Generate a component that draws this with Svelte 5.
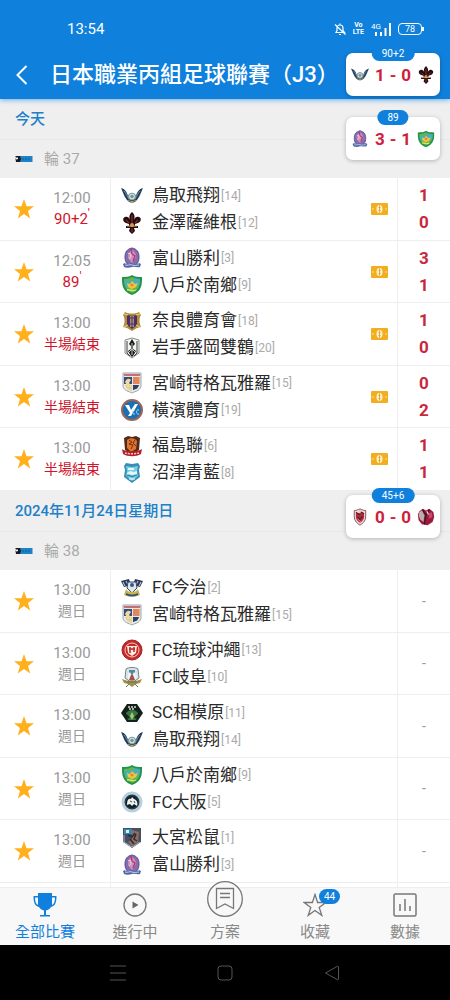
<script lang="ts">
  type Team = { name: string; rank: number; crest: string };

  type Match = {
    time: string;
    status: string;
    minute?: boolean;
    live?: boolean;
    home: Team;
    away: Team;
    score?: [number, number];
  };

  type Day = { date: string; round: string; matches: Match[] };

  const team = (name: string, rank: number, crest: string): Team => ({ name, rank, crest });

  const tottori = team('鳥取飛翔', 14, 'tottori');
  const toyama = team('富山勝利', 3, 'toyama');
  const hachinohe = team('八戶於南鄉', 9, 'hachinohe');
  const miyazaki = team('宮崎特格瓦雅羅', 15, 'miyazaki');

  const days: Day[] = [
    {
      date: '今天',
      round: '輪 37',
      matches: [
        { time: '12:00', status: '90+2', minute: true, live: true, home: tottori, away: team('金澤薩維根', 12, 'kanazawa'), score: [1, 0] },
        { time: '12:05', status: '89', minute: true, live: true, home: toyama, away: hachinohe, score: [3, 1] },
        { time: '13:00', status: '半場結束', live: true, home: team('奈良體育會', 18, 'nara'), away: team('岩手盛岡雙鶴', 20, 'iwate'), score: [1, 0] },
        { time: '13:00', status: '半場結束', live: true, home: miyazaki, away: team('橫濱體育', 19, 'yokohama'), score: [0, 2] },
        { time: '13:00', status: '半場結束', live: true, home: team('福島聯', 6, 'fukushima'), away: team('沼津青藍', 8, 'numazu'), score: [1, 1] }
      ]
    },
    {
      date: '2024年11月24日星期日',
      round: '輪 38',
      matches: [
        { time: '13:00', status: '週日', home: team('FC今治', 2, 'imabari'), away: miyazaki },
        { time: '13:00', status: '週日', home: team('FC琉球沖繩', 13, 'ryukyu'), away: team('FC岐阜', 10, 'gifu') },
        { time: '13:00', status: '週日', home: team('SC相模原', 11, 'sagamihara'), away: tottori },
        { time: '13:00', status: '週日', home: hachinohe, away: team('FC大阪', 5, 'osaka') },
        { time: '13:00', status: '週日', home: team('大宮松鼠', 1, 'omiya'), away: toyama }
      ]
    }
  ];

  // floating live scores
  const floats = [
    { slot: 'first', minute: '90+2', home: 'tottori', away: 'kanazawa', score: [1, 0] },
    { slot: 'second', minute: '89', home: 'toyama', away: 'hachinohe', score: [3, 1] },
    { slot: 'third', minute: '45+6', home: 'redShield', away: 'redBall', score: [0, 0] }
  ];

  const tabs = [
    { id: 'all', label: '全部比賽' },
    { id: 'live', label: '進行中' },
    { id: 'plan', label: '方案' },
    { id: 'fav', label: '收藏', badge: 44 },
    { id: 'data', label: '數據' }
  ];

  let activeTab = $state('all');
</script>

{#snippet crest(id: string)}
  <svg class="crest" viewBox="0 0 22 22" aria-hidden="true">
    {#if id === 'tottori'}
      <path d="M0 3c4 1 6 4 7 8 1-2 2-3 4-3s3 1 4 3c1-4 3-7 7-8-2 4-3 9-7 13-2 2-6 2-8 0C3 12 2 7 0 3z" fill="#233c5c" />
      <path d="M3 6c2 2 3 5 5 8M19 6c-2 2-3 5-5 8" stroke="#6f93a5" stroke-width="1" fill="none" />
      <circle cx="11" cy="11.5" r="3.4" fill="#d9e5dc" stroke="#7ba0a0" />
      <path d="M9 11l2-1.500 2 1.500-1 2h-2z" fill="#6f94a0" />
      <path d="M7 15c2 2 6 2 8 0" stroke="#b9a860" fill="none" />
    {:else if id === 'kanazawa'}
      <path d="M11 0c3 3 3 5 2 8 1-3 3-4 5-3 3 1 2 5-1 6l-3 1v2h3v2h-4l1 3-3 3-3-3 1-3H5v-2h3v-2l-3-1C2 10 1 6 4 5c2-1 4 0 5 3-1-3-1-5 2-8z" fill="#250c10" />
      <path d="M11 3v8M5 8l3 3M17 8l-3 3M11 16v4" stroke="#8d2a25" stroke-width="1.200" />
      <circle cx="11" cy="13" r="2" fill="#cf9a55" />
      <path d="M6 14h10" stroke="#d8ad65" />
    {:else if id === 'toyama'}
      <path d="M11 1c5 1 7 4 7 9s-2 8-7 9c-5-1-7-4-7-9s2-8 7-9z" fill="#8a6bb0" stroke="#49508e" />
      <path d="M11 3c3 2 4 4 4 7l-4 6-4-5c0-4 1-6 4-8z" fill="#c995bd" />
      <path d="M10 2l1 5 3 2-2 5" stroke="#c42f67" stroke-width="1.300" fill="none" />
      <path d="M7 7c1-1 3-1 3 1s-1 3-2 4" stroke="#f0d7ea" fill="none" />
      <path d="M2 17c2-2 4 1 6 0s3-1 5 0 5-2 7 0l-1 3c-3 1-5-1-8 0s-6 1-8 0z" fill="#4d67a5" />
      <path d="M4 18c3 1 4-1 7 0s5 0 7 0" stroke="#c7d4ec" fill="none" />
    {:else if id === 'hachinohe'}
      <path d="M1 3c4 0 7 0 10-2 3 2 6 2 10 2 0 8 0 14-10 18C1 17 1 11 1 3z" fill="#22934b" />
      <path d="M3 5c3 0 6-1 8-2 2 1 5 2 8 2 0 6-1 11-8 14C4 16 3 11 3 5z" fill="#65b64c" />
      <path d="M3 7c4-1 5 1 8-1s5-1 8-1c0 3 0 5-2 7-4 1-8 3-12 1z" fill="#46aebe" />
      <path d="M6 9l3 1 2-3 3 3 3-1-2 4-4 2-4-2z" fill="#f2c63d" />
      <circle cx="11" cy="11" r="1.500" fill="#ec7f3a" />
      <path d="M6 16c3-1 6 2 9 0" stroke="#dce45c" stroke-width="1.500" fill="none" />
    {:else if id === 'nara'}
      <path d="M4 2c4 2 10 2 14 0l2 3c-2 3-2 8 0 12l-4 1-5 3-5-3-4-1c2-4 2-9 0-12z" fill="#b48b3a" />
      <path d="M6 5c3 1 7 1 10 0v10l-5 4-5-4z" fill="#463063" />
      <path d="M9 6h4v11H9z" fill="#a88b91" />
      <path d="M11 6v11M7 8h8M7 14h8" stroke="#573453" />
      <path d="M3 4l4 1M15 5l4-1M3 17l4-2M19 17l-4-2" stroke="#ead38d" />
    {:else if id === 'iwate'}
      <path d="M4 3l7-2 7 2v13l-7 5-7-5z" fill="#f3f3f0" stroke="#888c89" />
      <path d="M11 2l3 5-2 2v3l3 2-3 5-1 1-1-1-3-5 3-2V9L8 7z" fill="#191b1c" />
      <path d="M11 6v12M8 15l3-3 3 3" stroke="#c5c8c5" fill="none" />
      <path d="M6 4v12l3 3M16 4v12l-3 3" stroke="#3b3f42" fill="none" />
    {:else if id === 'miyazaki'}
      <path d="M2 1h18v14c-2 4-5 4-9 6-4-2-7-2-9-6z" fill="#ede8dc" stroke="#9aa5b8" />
      <path d="M3 5h8v7H3z" fill="#334e7e" />
      <path d="M12 5h7v7h-7z" fill="#ebb377" />
      <path d="M3 3h16" stroke="#b64655" stroke-width="1.500" />
      <path d="M12 13h6c-1 4-3 4-6 5z" fill="#29416f" />
      <path d="M4 13h7v6c-4-1-6-3-7-6z" fill="#dfd493" />
      <path d="M4 10c2-4 4-4 6-2l-2 3 3 3-4 1z" fill="#efd9a0" />
      <path d="M13 5v7M15 5v7M17 5v7" stroke="#d45b50" />
    {:else if id === 'yokohama'}
      <circle cx="11" cy="11" r="10" fill="#1671b7" stroke="#9a6558" stroke-width="2" />
      <path d="M4 6h4l2 5 4-6h3l-7 12H7l2-3z" fill="#fff" />
      <path d="M14 11h-1c-2 0-2 4 0 4h1M18 11h-1c-2 0-2 4 0 4h1" stroke="#b4dcee" fill="none" />
    {:else if id === 'fukushima'}
      <path d="M3 3l4-2 4 1 4-1 4 2-1 12-7 4-7-4z" fill="#512a1c" />
      <path d="M6 5c3-3 8-2 10 1l-1 8-5 3-4-4z" fill="#df762c" />
      <path d="M8 5l3 2-3 2 4 1-2 4M14 5l-2 3 3 3" stroke="#702c19" fill="none" />
      <path d="M1 14c3 3 16 3 20 0l-1 5c-5 3-13 3-18 0z" fill="#b51f2b" />
      <path d="M4 18c4 1 10 1 14 0" stroke="#f1c9b2" stroke-width="1.500" stroke-dasharray="2 1" fill="none" />
    {:else if id === 'numazu'}
      <path d="M5 1l6 1 6-1 2 3-1 4 1 7-8 6-8-6 1-7-1-4z" fill="#398cb6" />
      <path d="M5 4l6 1 6-1-1 5 1 5-6 5-6-5 1-5z" fill="#75d0e3" />
      <path d="M7 6h6v2H7zM6 11l3-2 4 1 3-1v3l-5 1-5-1z" fill="#e7f6f4" />
      <path d="M6 14c3-2 4 2 7 0l3-1" stroke="#2789b1" stroke-width="1.300" fill="none" />
      <path d="M8 17h6" stroke="#fff" />
    {:else if id === 'imabari'}
      <path d="M0 4l8-2 2 6-7 2zM22 4l-8-2-2 6 7 2z" fill="#263861" />
      <path d="M2 5l2 4M5 4l2 4M20 5l-2 4M17 4l-2 4" stroke="#d8d9ca" />
      <path d="M7 5h8l1 6-5 5-5-5z" fill="#dfe7e4" stroke="#314568" />
      <circle cx="11" cy="8" r="2" fill="#315796" />
      <path d="M5 12c1 2 3 3 6 3s5-1 6-3l2 6c-5 2-11 2-16 0z" fill="#c6b54f" />
      <path d="M5 16c4 2 8 2 12 0v2c-4 2-8 2-12 0z" fill="#385376" />
    {:else if id === 'ryukyu'}
      <circle cx="11" cy="11" r="10" fill="#c9272c" stroke="#9d2028" />
      <circle cx="11" cy="11" r="7" fill="none" stroke="#efd0b2" />
      <path d="M6 7h10l-1 7-4 3-4-3z" fill="#f8eee0" />
      <path d="M9 8v6M13 8v5M8 10h6" stroke="#bd2428" stroke-width="1.500" />
    {:else if id === 'gifu'}
      <path d="M5 3c2-2 10-2 12 0l1 9-7 5-7-5z" fill="#d9e6e8" stroke="#71848c" />
      <path d="M8 4h6v6H8z" fill="#5487a1" />
      <path d="M7 8l2-2 2 4 2-4 3 3-1 4H7z" fill="#eef4ef" />
      <path d="M10 9l-2 5h6l-2-5z" fill="#a64e51" />
      <path d="M1 13l6 2 4-1 4 1 6-2-2 4-4 1-4 3-4-3-4-1z" fill="#a78e43" />
      <path d="M6 16h10M8 18l-3 3M14 18l3 3" stroke="#57766a" />
    {:else if id === 'sagamihara'}
      <path d="M6 2h10l6 9-6 9H6l-6-9z" fill="#13211b" />
      <path d="M5 11c3-4 9-4 12 0l-2 7H7z" fill="#377544" />
      <path d="M7 5h8M8 7h6" stroke="#dadcd3" stroke-width="1.500" stroke-dasharray="2 1" />
      <path d="M11 10l2 4-2 4-2-4z" fill="#a5ca70" />
      <path d="M5 13l3 3M17 13l-3 3" stroke="#132219" stroke-width="2" />
    {:else if id === 'osaka'}
      <circle cx="11" cy="11" r="9" fill="#263a49" stroke="#b8d0dc" stroke-width="3" />
      <circle cx="11" cy="11" r="6" fill="#121d26" />
      <path d="M6 14c0-4 1-7 4-6l1-2 2 2c3 1 4 4 3 7l-3-2-2 2-2-2z" fill="#edf2ef" />
      <path d="M9 10l2 1M13 10l1 2" stroke="#344a57" />
    {:else if id === 'omiya'}
      <path d="M2 1h18v14l-9 6-9-6z" fill="#46505f" />
      <path d="M3 2h8v5H3z" fill="#3488bc" />
      <path d="M11 3l7 2-1 10-6 4-4-4 4-3z" fill="#936c5d" />
      <path d="M7 8l4 2 3-4M9 12l4 5M15 7l-2 5 3 2" stroke="#282d39" stroke-width="1.500" fill="none" />
      <path d="M5 3h3v3H5z" fill="#d9edf0" />
      <path d="M3 8v7l8 5 8-5" stroke="#a9b8c7" fill="none" />
    {:else if id === 'redShield'}
      <path d="M4 3c3 0 5-1 7-2 2 1 4 2 7 2v8c0 5-4 8-7 10-3-2-7-5-7-10z" fill="#f0dbd9" stroke="#704149" />
      <path d="M6 6h10v6c-1 3-3 5-5 6-3-2-5-4-5-7z" fill="#b7293d" />
      <path d="M6 5l4 3 3-3 3 2M8 11l3 3 3-4" stroke="#4d2028" stroke-width="1.300" fill="none" />
      <path d="M11 2v5M8 13l4 4" stroke="#e49a9f" />
    {:else if id === 'redBall'}
      <path d="M3 4l4-3 4 2 4-2 5 4 1 6-2 6-6 4-7-1-4-5-1-7z" fill="#9c1a3b" />
      <path d="M3 5l3-2 3 6-1 8-4-3-2-5z" fill="#bbaeb2" />
      <path d="M7 2l4 7 4-7M11 9l-2 11" stroke="#3b1625" stroke-width="1.500" fill="none" />
      <path d="M14 7l4-2 1 6-4 2z" fill="#ca496a" />
      <path d="M12 4l2 4" stroke="#ecdee1" stroke-width="1.500" />
    {/if}
  </svg>
{/snippet}

{#snippet tabIcon(id: string)}
  {#if id === 'all'}
    <svg width="24" height="24" viewBox="0 0 24 24" aria-hidden="true">
      <path d="M5 0h14v3h4.500c0 7-1.500 10-5.500 11-1 2-3 3-5 3.500V22h4v1.500H7V22h4v-4.500c-2-.5-4-1.500-5-3.500-4-1-5.500-4-5.500-11H5zM2 4.500c0 4 1 6.500 3 7.500V4.500zm20 0h-3V12c2-1 3-3.500 3-7.500z" fill="#1080dc" />
    </svg>
  {:else if id === 'live'}
    <svg width="24" height="24" viewBox="0 0 24 24" aria-hidden="true">
      <circle cx="12" cy="12" r="11" fill="none" stroke="#777" stroke-width="1.300" />
      <path d="M9.500 8.500v7l6-3.500z" fill="#666" />
    </svg>
  {:else if id === 'plan'}
    <svg width="36" height="36" viewBox="0 0 36 36" aria-hidden="true">
      <circle cx="18" cy="18" r="17.300" fill="#f8f8f8" stroke="#777" stroke-width="1.300" />
      <path d="M9.500 7.500h17v20L18 23l-8.500 4.500zM13 12.500h10M13 16.500h10" fill="none" stroke="#777" stroke-width="1.300" />
    </svg>
  {:else if id === 'fav'}
    <svg width="24" height="24" viewBox="0 0 24 24" aria-hidden="true">
      <path d="M12 1.500l2.600 8h8.200l-6.600 4.900 2.600 8L12 17.500l-6.800 4.900 2.600-8L1.200 9.500h8.200z" fill="none" stroke="#777" stroke-width="1.300" />
    </svg>
  {:else}
    <svg width="24" height="24" viewBox="0 0 24 24" aria-hidden="true">
      <rect x="1" y="1" width="22" height="22" rx="1.500" fill="none" stroke="#777" stroke-width="1.500" />
      <path d="M7 11v7M12 6v12M17 13v5" stroke="#777" stroke-width="1.500" />
    </svg>
  {/if}
{/snippet}

<div class="screen">
  <header class="header">
    <div class="status-bar">
      <span class="clock">13:54</span>
      <div class="status-icons">
        <svg width="12" height="13" viewBox="0 0 12 13" aria-hidden="true">
          <path d="M2 9.500h8.500L9 7.500V5c0-4-6-4-6 0v2.500zM5 11.500h2M1 1.500l10.500 10M6 .5V2" fill="none" stroke="#fff" stroke-width="1.200" />
        </svg>
        <span class="volte">Vo<br />LTE</span>
        <span class="signal">
          <span class="gen">4G</span>
          <svg width="18" height="13" viewBox="0 0 18 13" aria-hidden="true">
            <path d="M3 13v-4M8 13v-4M12.500 13V5M17 13V0" stroke="#fff" stroke-width="2" />
          </svg>
        </span>
        <span class="battery">78</span>
      </div>
    </div>
    <div class="title-bar">
      <button class="back" aria-label="返回">
        <svg width="12" height="20" viewBox="0 0 12 20" aria-hidden="true">
          <path d="M10.500 1L1.500 10l9 9" fill="none" stroke="#fff" stroke-width="2" />
        </svg>
      </button>
      <h1>日本職業丙組足球聯賽（J3）</h1>
    </div>
  </header>

  <main class="list">
    {#each days as day}
      <section>
        <h2 class="date">{day.date}</h2>
        <div class="round">
          <svg width="18" height="8" viewBox="0 0 18 8" aria-hidden="true">
            <path d="M5 1h12.500v6H5z" fill="#1d83c6" />
            <path d="M0 1h5l1 3-1 3H1z" fill="#151b22" />
            <path d="M0 1c0 3 1 4 3 3V2L2 3z" fill="#eee" />
            <path d="M7 4h9" stroke="#16609a" stroke-dasharray="2 1" />
          </svg>
          <span>{day.round}</span>
        </div>
        <ul class="matches">
          {#each day.matches as match}
            <li class="match">
              <button class="star" aria-label="收藏">
                <svg width="20" height="20" viewBox="0 0 20 20" aria-hidden="true">
                  <path d="M10 0l2.500 7.200H20l-6 4.700 2.200 7.600L10 15l-6.200 4.500L6 11.900 0 7.200h7.500z" fill="#ffb01c" />
                </svg>
              </button>
              <div class="time">
                <span>{match.time}</span>
                <span class="status" class:live={match.live} class:minutes={match.minute}>
                  {match.status}{#if match.minute}<sup>'</sup>{/if}
                </span>
              </div>
              <div class="teams">
                {#each [match.home, match.away] as side}
                  <div class="team">
                    {@render crest(side.crest)}
                    <span class="name">{side.name}</span>
                    <span class="rank">[{side.rank}]</span>
                  </div>
                {/each}
              </div>
              {#if match.live}
                <svg class="money" width="17" height="12" viewBox="0 0 17 12" aria-hidden="true">
                  <rect width="17" height="12" rx="1" fill="#f3ae20" />
                  <ellipse cx="8.500" cy="6" rx="3" ry="4" fill="#fff2cf" />
                  <path d="M8.500 2.500v7M7.500 4.500h2M7.500 7.500h2" stroke="#e5a32a" />
                  <path d="M1.500 5l1.500 1-1.500 1zM15.500 5L14 6l1.500 1z" fill="#fff2cf" />
                </svg>
              {/if}
              <div class="score">
                {#if match.score}
                  <span>{match.score[0]}</span>
                  <span>{match.score[1]}</span>
                {:else}
                  <span class="pending">-</span>
                {/if}
              </div>
            </li>
          {/each}
        </ul>
      </section>
    {/each}
    <div class="match next">
      <div class="teams"></div>
      <div class="score"></div>
    </div>
  </main>

  {#each floats as item}
    <aside class="float {item.slot}">
      <span class="minute">{item.minute}</span>
      {@render crest(item.home)}
      <strong>
        <span>{item.score[0]}</span>
        <span>-</span>
        <span>{item.score[1]}</span>
      </strong>
      {@render crest(item.away)}
    </aside>
  {/each}

  <nav class="tabs">
    {#each tabs as tab}
      <a href="#{tab.id}" class:active={activeTab === tab.id} onclick={() => (activeTab = tab.id)}>
        <span class="tab-icon">
          {@render tabIcon(tab.id)}
          {#if tab.badge}<span class="badge">{tab.badge}</span>{/if}
        </span>
        <span>{tab.label}</span>
      </a>
    {/each}
  </nav>

  <footer class="system-bar">
    <button aria-label="選單">
      <svg width="16" height="16" viewBox="0 0 16 16" aria-hidden="true">
        <path d="M0 1h16M0 8h16M0 15h16" stroke="#555" />
      </svg>
    </button>
    <button aria-label="主畫面">
      <svg width="16" height="16" viewBox="0 0 16 16" aria-hidden="true">
        <rect x="1" y="1" width="14" height="14" rx="3" fill="none" stroke="#555" />
      </svg>
    </button>
    <button aria-label="上一頁">
      <svg width="16" height="16" viewBox="0 0 16 16" aria-hidden="true">
        <path d="M14.500 2v12c0 1-1 1-1.500.5L1.500 8 13 1.500c.5-.5 1.500-.5 1.500.5z" fill="none" stroke="#555" />
      </svg>
    </button>
  </footer>
</div>

<style>
  :global(body) {
    margin: 0;
  }

  .screen {
    position: relative;
    display: flex;
    flex-direction: column;
    height: 100vh;
    overflow: hidden;
    background: #fff;
    color: #2a2a2a;
    font-family: Roboto, 'Noto Sans CJK TC', sans-serif;
  }

  button {
    padding: 0;
    border: none;
    background: none;
    cursor: pointer;
  }

  svg {
    display: block;
    flex: none;
  }

  .header {
    z-index: 1;
    flex: none;
    background: #0f80dc;
    color: #fff;
    box-shadow: 0 1px 5px rgba(15, 128, 220, 0.6);
  }

  .status-bar {
    display: flex;
    align-items: center;
    justify-content: space-between;
    height: 42px;
    padding: 8px 28px 0 67px;
  }

  .clock {
    font-size: 15px;
  }

  .status-icons {
    display: flex;
    align-items: center;
    gap: 7px;
  }

  .volte {
    font-size: 7px;
    line-height: 7px;
    font-weight: 700;
    text-align: center;
  }

  .signal {
    display: flex;
    position: relative;
    padding-left: 2px;
  }

  .gen {
    position: absolute;
    top: 0;
    left: 0;
    font-size: 8px;
    line-height: 7px;
  }

  .battery {
    position: relative;
    width: 22px;
    border: 1px solid #fff;
    border-radius: 4px;
    font-size: 9px;
    line-height: 10px;
    text-align: center;
  }

  .battery::after {
    content: '';
    position: absolute;
    top: 3px;
    right: -3px;
    width: 2px;
    height: 4px;
    background: #fff;
  }

  .title-bar {
    display: flex;
    align-items: center;
    height: 49px;
    padding-left: 16px;
    gap: 22px;
  }

  h1 {
    margin: 0;
    font-size: 22px;
    line-height: 32px;
    font-weight: 500;
    white-space: nowrap;
  }

  .list {
    display: flex;
    flex: 1;
    flex-direction: column;
    min-height: 0;
    overflow: hidden;
  }

  section {
    flex: none;
  }

  .date,
  .round {
    margin: 0;
    padding: 0 15px;
    background: #efeff0;
    font-size: 15px;
  }

  .date {
    border-bottom: 1px solid #e7e7e7;
    color: #2080c8;
    font-weight: 500;
    line-height: 40px;
  }

  .round {
    display: flex;
    align-items: center;
    gap: 11px;
    color: #aaa;
    line-height: 38px;
  }

  .matches {
    margin: 0;
    padding: 0;
    list-style: none;
  }

  .match {
    display: flex;
    align-items: center;
    height: 61px;
    border-bottom: 1px solid #eee;
  }

  .match:nth-child(odd) {
    height: 62px;
  }

  .star {
    display: flex;
    justify-content: center;
    width: 48px;
  }

  .time {
    display: flex;
    flex-direction: column;
    align-items: center;
    width: 48px;
    padding-right: 14px;
    color: #999;
    font-size: 15px;
    line-height: 21px;
    white-space: nowrap;
  }

  .status {
    font-size: 14px;
  }

  .live {
    color: #d0142c;
  }

  .minutes {
    font-size: 15px;
  }

  sup {
    font-size: 12px;
    line-height: 0;
  }

  .teams {
    display: flex;
    flex: 1;
    flex-direction: column;
    justify-content: center;
    align-self: stretch;
    padding-left: 10px;
    border-left: 1px solid #eee;
  }

  .team {
    display: flex;
    align-items: center;
    height: 27px;
  }

  .crest {
    width: 22px;
    height: 22px;
  }

  .name {
    padding: 0 1px 0 9px;
    font-size: 17px;
    line-height: 27px;
  }

  .rank {
    color: #aaa;
    font-size: 12px;
  }

  .money {
    margin-right: 9px;
  }

  .score {
    display: flex;
    flex-direction: column;
    align-items: center;
    justify-content: center;
    align-self: stretch;
    width: 52px;
    border-left: 1px solid #eee;
    color: #c8283c;
    font-size: 17px;
    font-weight: 700;
    line-height: 27px;
  }

  .pending {
    color: #999;
    font-size: 14px;
    font-weight: 400;
  }

  .next {
    flex: 1;
    padding-left: 110px;
  }

  .float {
    position: absolute;
    z-index: 2;
    right: 10px;
    display: flex;
    align-items: center;
    justify-content: space-between;
    box-sizing: border-box;
    width: 94px;
    height: 43px;
    padding: 0 5px;
    border-radius: 7px;
    background: #fff;
    box-shadow: 0 1px 4px rgba(0, 0, 0, 0.25);
  }

  .float .crest {
    width: 18px;
    height: 18px;
  }

  .float strong {
    display: flex;
    gap: 5px;
    color: #d0203a;
    font-size: 17px;
    font-weight: 700;
  }

  .first {
    top: 53px;
  }

  .second {
    top: 117px;
  }

  .third {
    top: 495px;
  }

  .minute {
    position: absolute;
    top: -7px;
    left: 50%;
    padding: 0 10px;
    border-radius: 8px;
    background: #0f80dc;
    color: #fff;
    font-size: 10px;
    line-height: 15px;
    transform: translateX(-50%);
  }

  .tabs {
    z-index: 1;
    display: flex;
    flex: none;
    height: 57px;
    background: #f8f8f8;
  }

  .tabs a {
    display: flex;
    flex: 1;
    flex-direction: column;
    align-items: center;
    justify-content: flex-end;
    padding-bottom: 2px;
    color: #888;
    font-size: 15px;
    line-height: 22px;
    text-decoration: none;
  }

  .tabs .active {
    color: #1080dc;
  }

  .tab-icon {
    position: relative;
    margin-bottom: 4px;
  }

  .badge {
    position: absolute;
    top: -4px;
    left: 16px;
    padding: 0 5px;
    border-radius: 8px;
    background: #0f80dc;
    color: #fff;
    font-size: 10px;
    line-height: 15px;
  }

  .system-bar {
    display: flex;
    flex: none;
    height: 55px;
    padding: 0 64px;
    background: #000;
  }

  .system-bar button {
    display: flex;
    flex: 1;
    align-items: center;
    justify-content: center;
  }
</style>
